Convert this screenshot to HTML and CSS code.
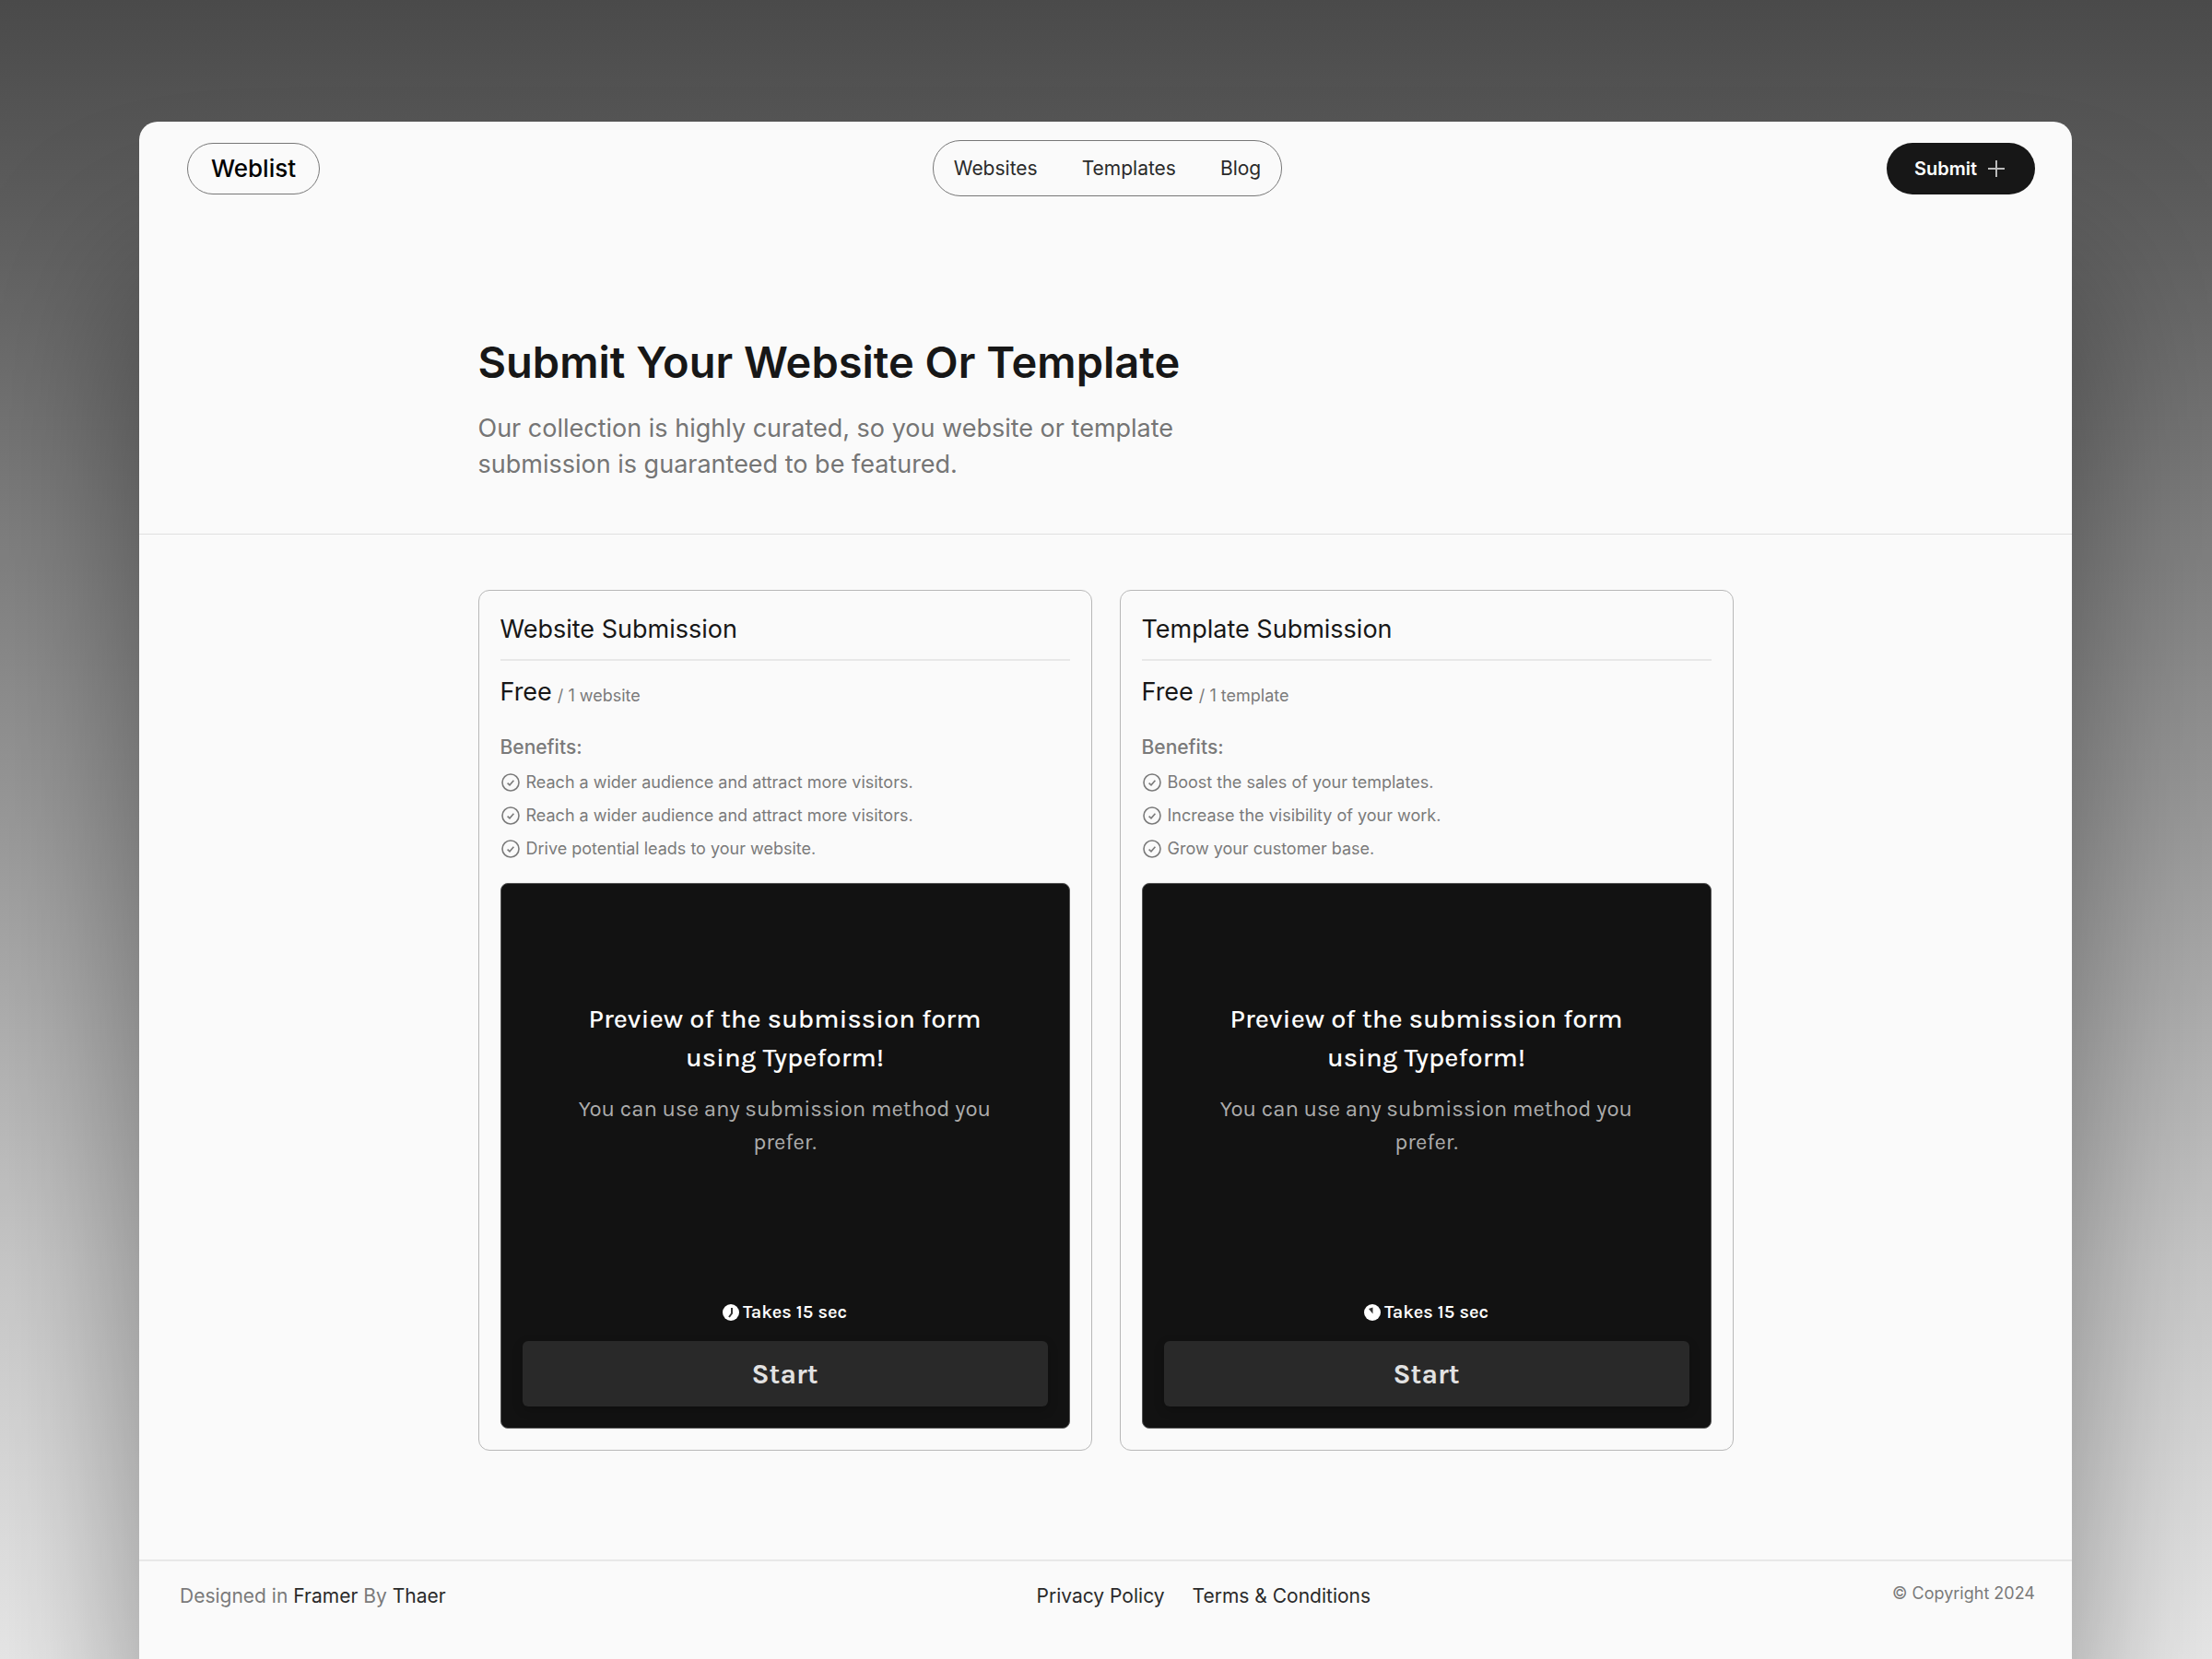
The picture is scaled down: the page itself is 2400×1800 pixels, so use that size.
FILE: index.html
```html
<!DOCTYPE html>
<html lang="en">
<head>
    <meta charset="UTF-8">
    <meta name="viewport" content="width=device-width, initial-scale=1.0">
    <title>Weblist - Submit</title>
    <link rel="stylesheet" href="styles.css">
</head>
<body>
    <!-- icons shared by both cards -->
    <svg class="sprite" aria-hidden="true">
        <symbol id="check" viewBox="0 0 22 22">
            <circle cx="11" cy="11" r="9" fill="none" stroke="currentColor" stroke-width="1.6"/>
            <path d="M7.6 11.6l2.4 2.2 4.4-5" fill="none" stroke="currentColor" stroke-width="1.6"/>
        </symbol>
    </svg>

    <div class="page">
        <header class="header">
            <a class="logo" href="#">Weblist</a>
            <nav class="nav">
                <a href="#">Websites</a>
                <a href="#">Templates</a>
                <a href="#">Blog</a>
            </nav>
            <button type="button" class="submit">
                Submit
                <svg width="18" height="18" viewBox="0 0 18 18" fill="none" stroke="#bbb" stroke-width="2"><path d="M9 0v18M0 9h18"/></svg>
            </button>
        </header>

        <section class="hero">
            <div class="container">
                <h1>Submit Your Website Or Template</h1>
                <p>Our collection is highly curated, so you website or template submission is guaranteed to be featured.</p>
            </div>
        </section>

        <main class="container cards">
            <article class="card">
                <h2>Website Submission</h2>
                <p class="price">Free <span>/ 1 website</span></p>
                <h3>Benefits:</h3>
                <ul class="benefits">
                    <li><svg><use href="#check"/></svg>Reach a wider audience and attract more visitors.</li>
                    <li><svg><use href="#check"/></svg>Reach a wider audience and attract more visitors.</li>
                    <li><svg><use href="#check"/></svg>Drive potential leads to your website.</li>
                </ul>
                <div class="form">
                    <div class="form-text">
                        <h4>Preview of the submission form using Typeform!</h4>
                        <p>You can use any submission method you prefer.</p>
                    </div>
                    <div class="time">
                        <svg viewBox="0 0 18 18"><circle cx="9" cy="9" r="9" fill="#fff"/><path d="M10 4v6L7 14" fill="none" stroke="#333" stroke-width="2"/></svg>
                        Takes 15 sec
                    </div>
                    <button type="button" class="start">Start</button>
                </div>
            </article>

            <article class="card">
                <h2>Template Submission</h2>
                <p class="price">Free <span>/ 1 template</span></p>
                <h3>Benefits:</h3>
                <ul class="benefits">
                    <li><svg><use href="#check"/></svg>Boost the sales of your templates.</li>
                    <li><svg><use href="#check"/></svg>Increase the visibility of your work.</li>
                    <li><svg><use href="#check"/></svg>Grow your customer base.</li>
                </ul>
                <div class="form">
                    <div class="form-text">
                        <h4>Preview of the submission form using Typeform!</h4>
                        <p>You can use any submission method you prefer.</p>
                    </div>
                    <div class="time">
                        <svg viewBox="0 0 18 18"><circle cx="9" cy="9" r="9" fill="#fff"/><path d="M5 5L9.500 3.500v7z" fill="#333"/></svg>
                        Takes 15 sec
                    </div>
                    <button type="button" class="start">Start</button>
                </div>
            </article>
        </main>

        <footer class="footer">
            <p>Designed in <a href="#">Framer</a> By <a href="#">Thaer</a></p>
            <div class="legal">
                <a href="#">Privacy Policy</a>
                <a href="#">Terms &amp; Conditions</a>
            </div>
            <small>© Copyright 2024</small>
        </footer>
    </div>
</body>
</html>
```

FILE: styles.css
```css
* {
    box-sizing: border-box;
    margin: 0;
    padding: 0;
}

body {
    min-height: 100vh;
    padding: 132px 152px 0 151px;
    overflow-x: hidden;
    display: flex;
    font-family: Inter, "Liberation Sans", sans-serif;
    color: #171717;
    background: linear-gradient(#4a4a4a, #5c5c5c 12%, #7e7e7e 32%, #9c9c9c 51%, #c8c8c8 76%, #e8e8e8);
}

a {
    color: inherit;
    text-decoration: none;
}

button {
    border: none;
    cursor: pointer;
    font-family: inherit;
}

.sprite {
    position: absolute;
    width: 0;
    height: 0;
}

.page {
    flex: 1;
    background-color: #fafafa;
    border-radius: 20px 20px 0 0;
    box-shadow: 0 160px 180px rgba(0, 0, 0, 0.38);
}

.container {
    width: 1362px;
    max-width: 100%;
    margin: 0 auto;
}

.header {
    display: grid;
    grid-template-columns: 1fr auto 1fr;
    align-items: center;
    padding: 20px 40px 0 44px;
}

.logo {
    justify-self: start;
    margin-left: 8px;
    padding: 0 25px;
    line-height: 54px;
    font-size: 26px;
    font-weight: 500;
    color: #000;
    border: 1px solid #777;
    border-radius: 28px;
}

.nav {
    display: flex;
    gap: 48px;
    padding: 0 22px;
    line-height: 59px;
    font-size: 21px;
    color: #2a2a2a;
    border: 1px solid #777;
    border-radius: 30px;
}

.submit {
    justify-self: end;
    display: flex;
    align-items: center;
    gap: 12px;
    height: 56px;
    padding: 0 33px 0 30px;
    font-size: 20px;
    font-weight: 600;
    color: #fff;
    background-color: #171717;
    border-radius: 28px;
}

.hero {
    padding: 150px 0 56px;
    border-bottom: 1px solid #e0e0e0;
}

.hero h1 {
    font-size: 47px;
    line-height: 60px;
    font-weight: 600;
}

.hero p {
    max-width: 800px;
    margin-top: 22px;
    font-size: 27px;
    line-height: 39px;
    color: #757575;
}

.cards {
    display: grid;
    grid-template-columns: 1fr 1fr;
    gap: 30px;
    padding: 60px 0 118px;
}

.card {
    padding: 23px;
    border: 1px solid #b8b8b8;
    border-radius: 12px;
}

.card h2 {
    padding-bottom: 13px;
    font-size: 27px;
    line-height: 38px;
    font-weight: 400;
    border-bottom: 2px solid #e8e8e8;
}

.price {
    display: flex;
    align-items: flex-end;
    gap: 6px;
    margin-top: 15px;
    font-size: 27px;
    line-height: 38px;
}

.price span {
    font-size: 18px;
    line-height: 30px;
    color: #7a7a7a;
}

.card h3 {
    margin-top: 26px;
    font-size: 21px;
    line-height: 30px;
    font-weight: 500;
    color: #7a7a7a;
}

.benefits {
    display: grid;
    gap: 8px;
    margin-top: 9px;
    list-style: none;
    font-size: 18px;
    line-height: 28px;
    color: #7a7a7a;
}

.benefits li {
    display: flex;
    align-items: center;
    gap: 6px;
}

.benefits svg {
    width: 22px;
    height: 22px;
}

.form {
    display: flex;
    flex-direction: column;
    height: 592px;
    margin-top: 23px;
    padding: 23px;
    text-align: center;
    font-family: Karla, "Noto Sans", sans-serif;
    color: #fff;
    background-color: #121212;
    border: 1px solid #555;
    border-radius: 8px;
}

.form-text {
    flex: 1;
    padding: 102px 60px 0;
}

.form h4 {
    font-size: 29px;
    line-height: 42px;
    font-weight: 500;
}

.form p {
    margin-top: 17px;
    font-size: 24px;
    line-height: 36px;
    color: #acacac;
}

.time {
    display: flex;
    align-items: center;
    justify-content: center;
    gap: 4px;
    margin-bottom: 17px;
    font-size: 20px;
    line-height: 28px;
    font-weight: 600;
}

.time svg {
    width: 18px;
    height: 18px;
}

.start {
    height: 71px;
    font-size: 30px;
    font-weight: 700;
    color: #e2e2e2;
    background-color: #292929;
    border-radius: 6px;
    box-shadow: 0 4px 12px rgba(0, 0, 0, 0.2);
}

.footer {
    display: flex;
    justify-content: space-between;
    padding: 22px 40px 40px 44px;
    font-size: 21px;
    line-height: 32px;
    border-top: 2px solid #e8e8e8;
}

.footer p {
    padding-right: 75px;
    color: #7a7a7a;
}

.footer a {
    color: #2a2a2a;
}

.legal {
    display: flex;
    gap: 30px;
}

.footer small {
    font-size: 18px;
    line-height: 26px;
    color: #7a7a7a;
}
```
